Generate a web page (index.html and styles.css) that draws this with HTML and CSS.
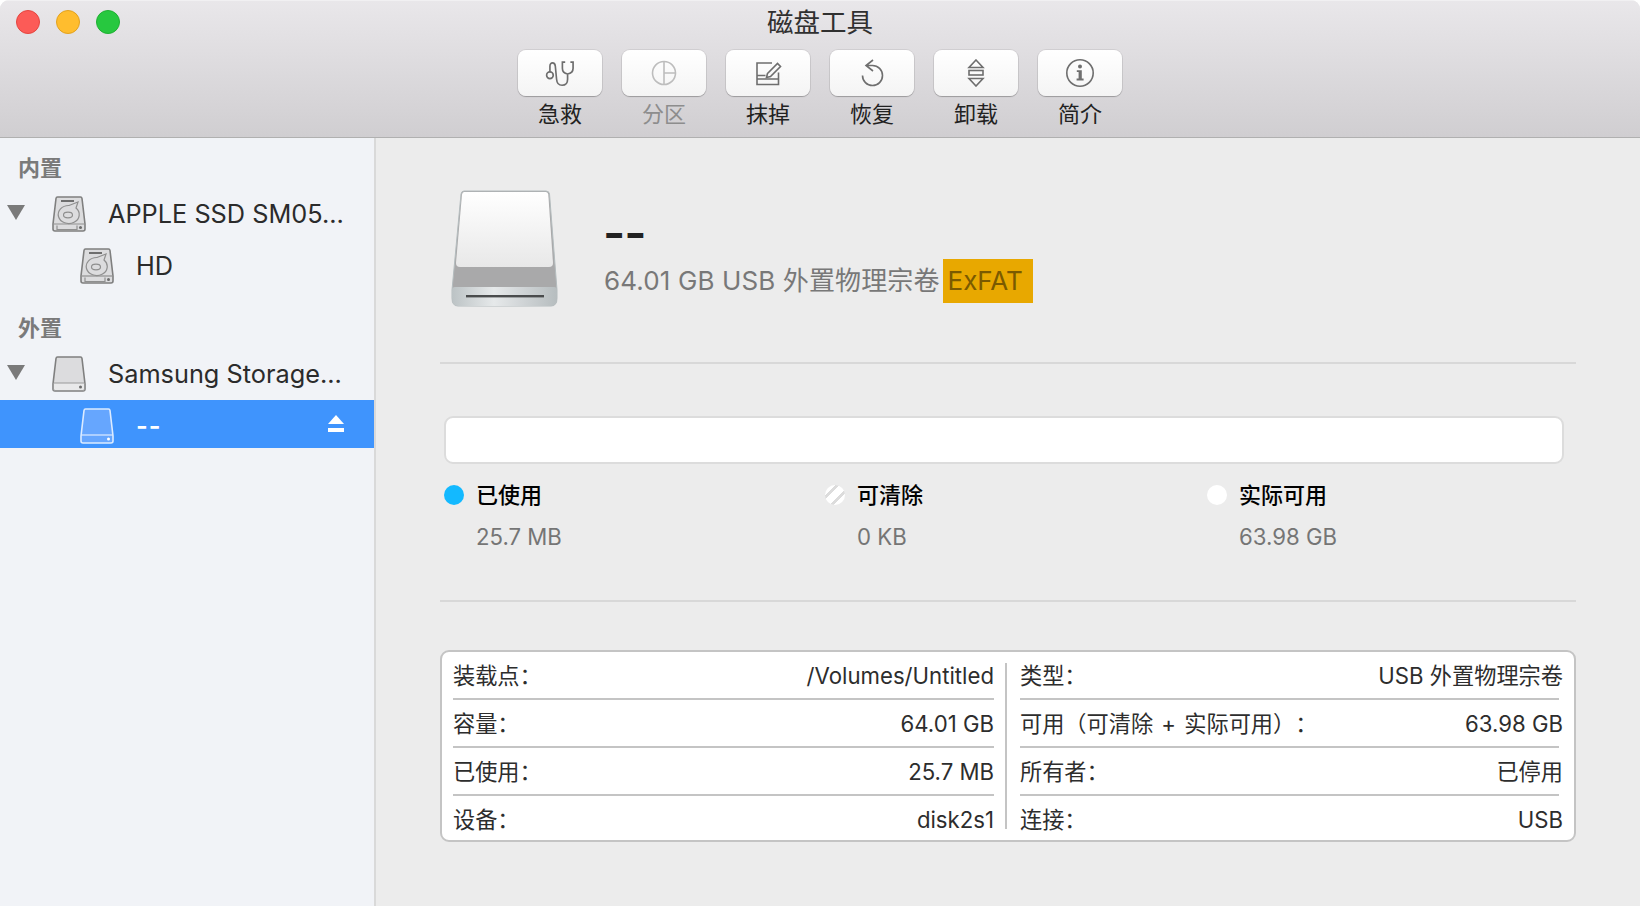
FILE: index.html
```html
<!DOCTYPE html>
<html lang="zh-CN">
<head>
<meta charset="utf-8">
<title>磁盘工具</title>
<link rel="stylesheet" href="styles.css">
</head>
<body>
<div class="window">
  <header class="titlebar">
    <div class="lights">
      <span class="light red"></span>
      <span class="light yellow"></span>
      <span class="light green"></span>
    </div>
    <div class="title-center">
      <div class="title">磁盘工具</div>
      <div class="toolbar">
        <div class="tool">
          <div class="tool-btn">
            <svg class="ico" width="30" height="27" viewBox="0 0 28 26"><circle cx="4.3" cy="14.7" r="3.2"/><path d="M4.3 11.5V6C4.3 3.8 5.4 2.7 6.8 2.7S9.3 3.8 9.5 6L10.7 18.5C11 22.3 13 24.3 16 24.3S21.3 22.3 21.3 18.5V13.5M21.3 13.5C18 13 16.3 11 16.3 8V2H19M21.3 13.5C24.6 13 26.6 11 26.6 8V2H24"/></svg>
          </div>
          <div class="tool-label">急救</div>
        </div>
        <div class="tool disabled">
          <div class="tool-btn">
            <svg class="ico" width="26" height="26" viewBox="0 0 26 26"><circle cx="13" cy="13" r="11.5"/><path d="M13 1.5V24.5M13 13H24.5"/></svg>
          </div>
          <div class="tool-label">分区</div>
        </div>
        <div class="tool">
          <div class="tool-btn">
            <svg class="ico" width="27" height="25" viewBox="0 0 27 25"><path d="M17 2H2V23.5H23.5V11.5M2 18H23.5M2 14.5H10.5"/><path d="M12.5 12.5L22.5 2.5L25.5 5.5L15.500 15.500L11.500 16.500Z"/></svg>
          </div>
          <div class="tool-label">抹掉</div>
        </div>
        <div class="tool">
          <div class="tool-btn">
            <svg class="ico" width="23" height="28" viewBox="0 0 23 28"><path d="M12 1L5 6.5L12 12M5.5 6.5H11.5A10 10 0 1 1 1.5 16.5"/></svg>
          </div>
          <div class="tool-label">恢复</div>
        </div>
        <div class="tool">
          <div class="tool-btn">
            <svg class="ico" width="18" height="28" viewBox="0 0 18 28"><path d="M9 1L16 8.5H2Z"/><rect x="2" y="11.5" width="14" height="4.5"/><path d="M2 19.5H16L9 27Z"/></svg>
          </div>
          <div class="tool-label">卸载</div>
        </div>
        <div class="tool">
          <div class="tool-btn">
            <svg class="ico" width="30" height="30" viewBox="0 0 30 30"><circle cx="15" cy="15" r="13.2"/><circle class="solid" cx="15" cy="8.6" r="2"/><path class="solid" d="M11.8 12.2H16.8V20.6H18.6V22.4H11.6V20.6H13.6V14H11.8Z"/></svg>
          </div>
          <div class="tool-label">简介</div>
        </div>
      </div>
    </div>
  </header>

  <div class="body">
    <aside class="sidebar">
      <div class="section first">内置</div>
      <div class="row">
        <span class="tri"></span>
        <svg class="disk" width="34" height="36" viewBox="0 0 34 36"><path class="d-body" d="M5.5 1H28.5Q29.8 1 30 2.5L33 28V33Q33 35 31 35H3Q1 35 1 33V28L4 2.5Q4.2 1 5.5 1Z"/><path class="d-line" d="M1 28H33"/><path class="d-dark" d="M9 4H22V6H9Z"/><path class="d-line" d="M26 6L24 12A10.500 9 0 1 1 17 9.500Z"/><ellipse class="d-line" cx="16" cy="19" rx="4.500" ry="2.800"/><path class="d-vent" d="M5 29.500V33.500H25V29.500"/><circle class="d-dot" cx="28.500" cy="31.500" r="1.500"/></svg>
        <span class="name">APPLE SSD SM05...</span>
      </div>
      <div class="row child">
        <svg class="disk" width="34" height="36" viewBox="0 0 34 36"><path class="d-body" d="M5.5 1H28.5Q29.8 1 30 2.5L33 28V33Q33 35 31 35H3Q1 35 1 33V28L4 2.5Q4.2 1 5.5 1Z"/><path class="d-line" d="M1 28H33"/><path class="d-dark" d="M9 4H22V6H9Z"/><path class="d-line" d="M26 6L24 12A10.500 9 0 1 1 17 9.500Z"/><ellipse class="d-line" cx="16" cy="19" rx="4.500" ry="2.800"/><path class="d-vent" d="M5 29.500V33.500H25V29.500"/><circle class="d-dot" cx="28.500" cy="31.500" r="1.500"/></svg>
        <span class="name">HD</span>
      </div>
      <div class="section">外置</div>
      <div class="row">
        <span class="tri"></span>
        <svg class="disk" width="34" height="36" viewBox="0 0 34 36"><path class="d-body" d="M5.5 1H28.5Q29.8 1 30 2.5L33 28V33Q33 35 31 35H3Q1 35 1 33V28L4 2.5Q4.2 1 5.5 1Z"/><path class="d-face" d="M1.500 27H32.500V33Q32.500 34.500 31 34.500H3Q1.500 34.500 1.500 33Z"/><circle class="d-dot" cx="28.500" cy="31" r="1.500"/></svg>
        <span class="name">Samsung Storage...</span>
      </div>
      <div class="row child selected">
        <svg class="disk" width="34" height="36" viewBox="0 0 34 36"><path class="d-body" d="M5.5 1H28.5Q29.8 1 30 2.5L33 28V33Q33 35 31 35H3Q1 35 1 33V28L4 2.5Q4.2 1 5.5 1Z"/><path class="d-line" d="M1 27H33"/><circle class="d-dot" cx="28.500" cy="31" r="1.500"/></svg>
        <span class="name dashes">--</span>
        <span class="eject"><span class="eject-tri"></span><span class="eject-bar"></span></span>
      </div>
    </aside>

    <main class="content">
      <div class="head">
        <svg class="big-disk" width="107" height="118" viewBox="0 0 107 118">
          <defs>
            <linearGradient id="panel" x1="0" y1="0" x2="0" y2="1"><stop offset="0" stop-color="#ffffff"/><stop offset="1" stop-color="#e8e8e8"/></linearGradient>
            <linearGradient id="front" x1="0" y1="0" x2="1" y2="0"><stop offset="0" stop-color="#bcc3c5"/><stop offset=".4" stop-color="#e6e9ea"/><stop offset=".65" stop-color="#d2d6d8"/><stop offset="1" stop-color="#b6bdbf"/></linearGradient>
          </defs>
          <path d="M13 1H95Q98 1 98.500 4L106 100V108Q106 116 100 116H7Q1 116 1 108V100L10 4Q10.500 1 13 1Z" fill="#a9a9aa" stroke="#b4bcbe"/>
          <path d="M13 2H95Q97 2 97.300 4.500L102 73Q102 77 98 77H9Q5 77 5 73L11 4.500Q11.300 2 13 2Z" fill="url(#panel)"/>
          <path d="M1 100Q1 97 4 97H103Q106 97 106 100V108Q106 116 100 116H7Q1 116 1 108Z" fill="url(#front)"/>
          <rect x="15" y="105" width="78" height="2.400" fill="#4a4c4d"/>
        </svg>
        <div class="head-text">
          <div class="vol">--</div>
          <div class="sub"><span class="sub-text">64.01 GB USB 外置物理宗卷</span><span class="tag">ExFAT</span></div>
        </div>
      </div>

      <div class="rule"></div>

      <div class="bar"></div>

      <div class="legend">
        <div class="leg">
          <span class="dot used"></span>
          <div class="leg-text"><div class="leg-label">已使用</div><div class="leg-value">25.7 MB</div></div>
        </div>
        <div class="leg">
          <span class="dot purge"></span>
          <div class="leg-text"><div class="leg-label">可清除</div><div class="leg-value">0 KB</div></div>
        </div>
        <div class="leg">
          <span class="dot free"></span>
          <div class="leg-text"><div class="leg-label">实际可用</div><div class="leg-value">63.98 GB</div></div>
        </div>
      </div>

      <div class="rule rule-2"></div>

      <div class="info">
        <div class="col left">
          <div class="cell"><span>装载点：</span><span>/Volumes/Untitled</span></div>
          <div class="cell"><span>容量：</span><span>64.01 GB</span></div>
          <div class="cell"><span>已使用：</span><span>25.7 MB</span></div>
          <div class="cell last"><span>设备：</span><span>disk2s1</span></div>
        </div>
        <div class="vsep"></div>
        <div class="col right">
          <div class="cell"><span>类型：</span><span class="val">USB 外置物理宗卷</span></div>
          <div class="cell"><span class="wide">可用（可清除 + 实际可用）：</span><span class="val">63.98 GB</span></div>
          <div class="cell"><span>所有者：</span><span class="val">已停用</span></div>
          <div class="cell last"><span>连接：</span><span class="val">USB</span></div>
        </div>
      </div>
    </main>
  </div>
</div>
</body>
</html>
```
FILE: styles.css
```css
* { box-sizing: border-box; }
html, body { margin: 0; height: 100%; }
body {
  background: #fff;
  font-family: Inter, "Noto Sans CJK SC", sans-serif;
  text-spacing-trim: space-all;
  overflow: hidden;
}
.window {
  width: 1640px;
  height: 906px;
  display: flex;
  flex-direction: column;
  border-radius: 9px 9px 0 0;
  overflow: hidden;
  background: #ececec;
}
.titlebar {
  height: 138px;
  flex: none;
  display: grid;
  grid-template-columns: 1fr auto 1fr;
  background: linear-gradient(#e9e7ea, #d0ced1);
  border-top: 1px solid #f1f0f2;
  border-bottom: 1px solid #b0b0b0;
}
.lights { display: flex; gap: 16px; padding: 9px 0 0 16px; }
.light { width: 24px; height: 24px; border-radius: 50%; border: 1px solid; }
.red { background: #fc5b57; border-color: #e5453f; }
.yellow { background: #ffbd2e; border-color: #e3a21e; }
.green { background: #27c83f; border-color: #1fb032; }
.title-center { display: flex; flex-direction: column; align-items: center; }
.title {
  height: 34px;
  margin-top: 5px;
  font-size: 26.500px;
  line-height: 33px;
  color: #303030;
}
.toolbar { display: flex; gap: 20px; margin-top: 10px; }
.tool { width: 84px; display: flex; flex-direction: column; align-items: center; }
.tool-btn {
  width: 84px;
  height: 46px;
  display: flex;
  align-items: center;
  justify-content: center;
  border-radius: 8px;
  background: linear-gradient(#ffffff, #f4f4f4);
  box-shadow: 0 0 0 1px rgba(0,0,0,.07), 0 1px 1px rgba(0,0,0,.22);
}
.tool-label {
  height: 28px;
  margin-top: 4px;
  font-size: 22px;
  line-height: 28px;
  color: #222;
}
.ico { fill: none; stroke: #6e6e6e; stroke-width: 1.6; }
.ico .solid { fill: #6e6e6e; stroke: none; }
.disabled .ico { stroke: #bdbdbd; }
.disabled .tool-label { color: #8d8d8d; }

.body { flex: 1; display: flex; min-height: 0; }
.sidebar {
  width: 376px;
  flex: none;
  background: #f1f3f7;
  border-right: 2px solid #d9d9d9;
}
.section {
  height: 40px;
  margin-top: 16px;
  padding-left: 18px;
  font-size: 22px;
  font-weight: 600;
  line-height: 40px;
  color: #7a7a7a;
}
.section.first { margin-top: 10px; }
.row {
  height: 52px;
  display: flex;
  align-items: center;
  padding-left: 7px;
  color: #2b2b2b;
}
.row.child { padding-left: 80px; }
.tri {
  width: 0;
  height: 0;
  margin-right: 27px;
  margin-bottom: 4px;
  border-left: 9px solid transparent;
  border-right: 9px solid transparent;
  border-top: 15px solid #7a7a7a;
}
.name { margin: 0 0 2px 22px; font-size: 25.300px; white-space: nowrap; }
.selected {
  height: 48px;
  padding-top: 4px;
  background: #3f94fd;
  color: #fff;
}
.dashes { font-weight: 600; letter-spacing: 1px; }
.disk { flex: none; }
.d-body { fill: #dcdcde; stroke: #7f7f7f; stroke-width: 1.6; }
.d-line { fill: none; stroke: #8f8f8f; stroke-width: 1.2; }
.d-dark { fill: #6f6f6f; }
.d-vent { fill: none; stroke: #8f8f8f; stroke-width: 1.2; }
.d-face { fill: #e9e9ea; stroke: #9a9a9a; stroke-width: 1; }
.d-dot { fill: #6c6c6c; }
.selected .d-body { fill: #66a6fe; stroke: #dcebff; }
.selected .d-line { stroke: #dcebff; }
.selected .d-dot { fill: #fff; }
.eject {
  margin-left: auto;
  margin-right: 30px;
  margin-bottom: 6px;
  display: flex;
  flex-direction: column;
  align-items: center;
  gap: 4px;
}
.eject-tri {
  width: 0;
  height: 0;
  border-left: 8px solid transparent;
  border-right: 8px solid transparent;
  border-bottom: 9px solid #fff;
}
.eject-bar { width: 16px; height: 4px; background: #fff; }

.content { flex: 1; min-width: 0; padding: 52px 64px 0; }
.head { display: flex; height: 118px; padding-left: 11px; margin-bottom: 54px; }
.big-disk { flex: none; }
.head-text { margin-left: 47px; padding-top: 20px; }
.vol {
  height: 46px;
  margin-left: -2px;
  font-size: 48px;
  font-weight: 600;
  line-height: 46px;
  letter-spacing: -1px;
  color: #222;
}
.sub {
  display: flex;
  align-items: flex-start;
  height: 44px;
  margin-top: 3px;
  font-size: 26px;
  color: #787878;
}
.sub-text { line-height: 44px; margin-left: -1px; letter-spacing: .12px; }
.tag {
  height: 44px;
  width: 90px;
  margin-left: 3px;
  padding-left: 5px;
  line-height: 44px;
  background: #e8a800;
  color: #7a5a00;
}
.rule { height: 2px; background: #d8d8d8; }
.rule-2 { margin-top: 51px; }
.bar {
  height: 48px;
  margin: 52px 12px 0 4px;
  background: #fff;
  border: 2px solid #dcdcdc;
  border-radius: 9px;
}
.legend {
  display: grid;
  grid-template-columns: 381px 382px 1fr;
  margin: 20px 0 0 4px;
}
.leg { display: flex; gap: 12px; }
.dot { width: 20px; height: 20px; border-radius: 50%; flex: none; margin-top: 1px; }
.used { background: #13b9ff; }
.purge { background: linear-gradient(135deg, #fff 0 26%, #dcdcdc 26% 36%, #fff 36% 62%, #dcdcdc 62% 72%, #fff 72%); }
.free { background: #fff; }
.leg-label {
  height: 24px;
  font-size: 22px;
  font-weight: 500;
  line-height: 23px;
  color: #000;
}
.leg-value {
  height: 24px;
  margin-top: 17px;
  font-size: 22.200px;
  line-height: 23px;
  color: #757575;
}
.info {
  display: flex;
  height: 192px;
  margin-top: 48px;
  padding: 0 15px 0 11px;
  background: #fff;
  border: 2px solid #c4c4c4;
  border-radius: 9px;
}
.col.left { width: 541px; flex: none; }
.col.right { flex: 1; min-width: 0; }
.vsep {
  flex: none;
  width: 2px;
  height: 166px;
  margin: 11px 13px 0 11px;
  background: #c4c4c4;
}
.cell {
  display: flex;
  justify-content: space-between;
  height: 48px;
  border-bottom: 2px solid #c4c4c4;
  font-size: 22.200px;
  line-height: 48px;
  color: #2d2d2d;
  white-space: nowrap;
}
.cell.last { height: 42px; border-bottom: 0; }
.val { margin-right: -4px; }
.wide { word-spacing: 2px; }
```
